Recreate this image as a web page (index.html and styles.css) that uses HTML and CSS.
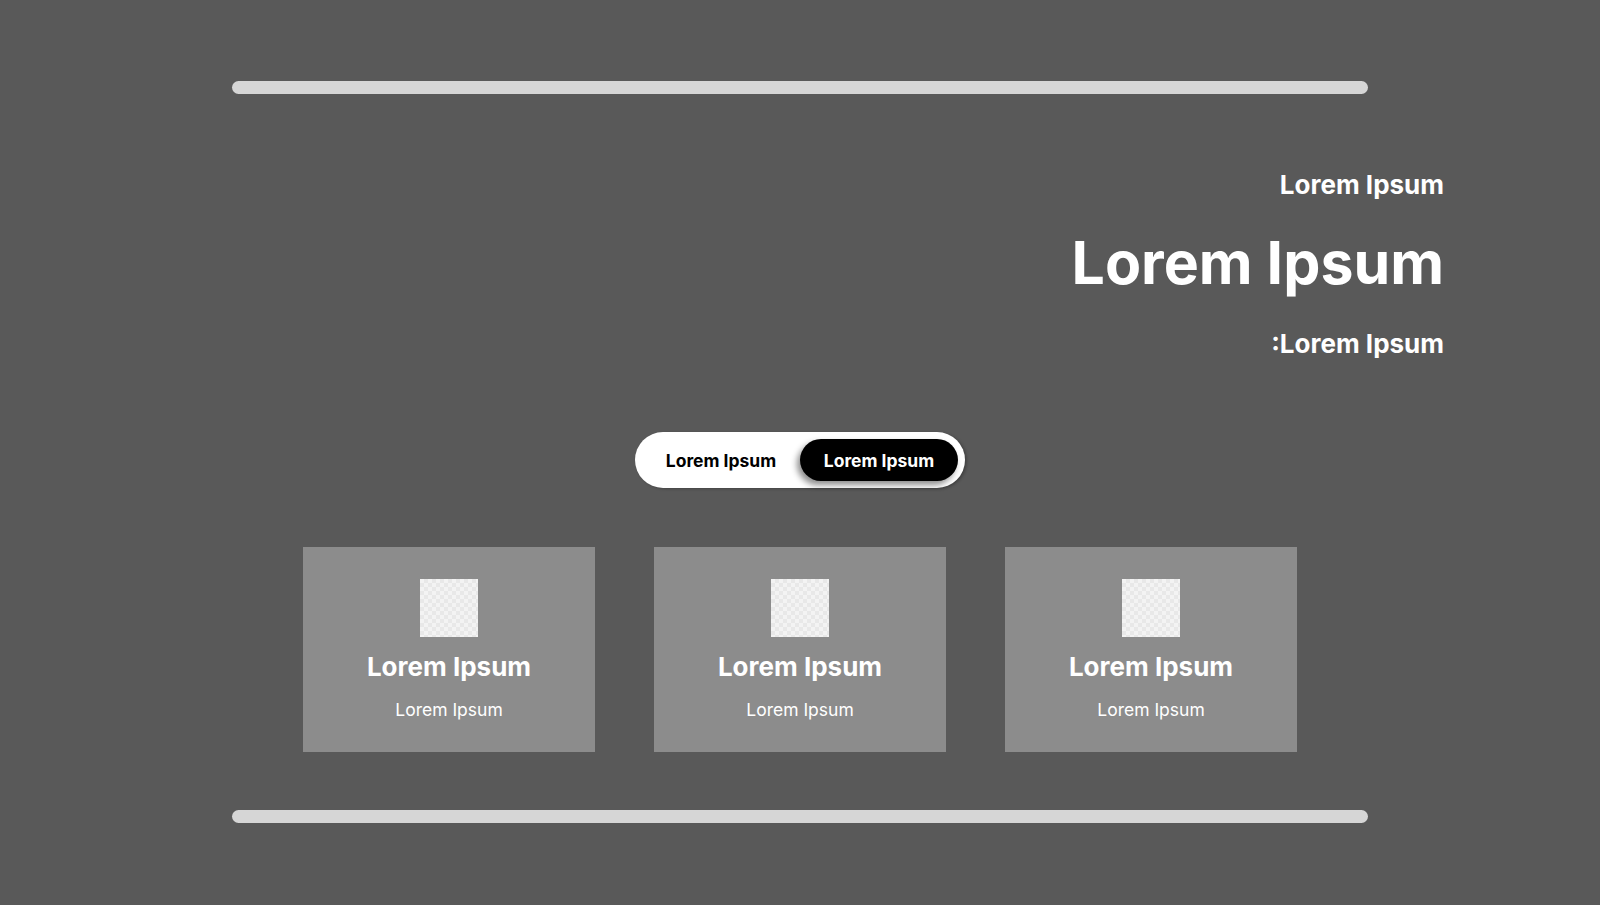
FILE: index.html
```html
<!DOCTYPE html>
<html lang="en">
<head>
<meta charset="utf-8">
<title>Lorem Ipsum</title>
<link rel="stylesheet" href="styles.css">
</head>
<body>
<main class="page">
  <div class="bar"></div>
  <header class="hero">
    <p class="eyebrow">Lorem Ipsum</p>
    <h1 class="title">Lorem Ipsum</h1>
    <p class="eyebrow lower">:Lorem Ipsum</p>
  </header>
  <div class="toggle">
    <button class="toggle-item">Lorem Ipsum</button>
    <button class="toggle-item active">Lorem Ipsum</button>
  </div>
  <section class="cards">
    <div class="card">
      <div class="thumb"></div>
      <h2 class="card-title">Lorem Ipsum</h2>
      <p class="card-text">Lorem Ipsum</p>
    </div>
    <div class="card">
      <div class="thumb"></div>
      <h2 class="card-title">Lorem Ipsum</h2>
      <p class="card-text">Lorem Ipsum</p>
    </div>
    <div class="card">
      <div class="thumb"></div>
      <h2 class="card-title">Lorem Ipsum</h2>
      <p class="card-text">Lorem Ipsum</p>
    </div>
  </section>
  <div class="bar bottom"></div>
</main>
</body>
</html>
```

FILE: styles.css
```css
* { box-sizing: border-box; }
html, body { margin: 0; padding: 0; }
body {
  background: #595959;
  font-family: Inter, "Noto Sans", sans-serif;
  color: #ffffff;
  width: 1600px;
  height: 905px;
  overflow: hidden;
}
.page {
  display: flex;
  flex-direction: column;
  align-items: center;
  padding-top: 81px;
}
.bar {
  width: 1136px;
  height: 13px;
  border-radius: 7px;
  background: #d6d6d6;
  flex: none;
}
.bar.bottom { margin-top: 58px; }
.hero {
  align-self: stretch;
  text-align: right;
  padding-right: 156px;
  margin-top: 75px;
}
.eyebrow {
  margin: 0;
  font-size: 26px;
  line-height: 32px;
  font-weight: 700;
}
.title {
  margin: 26px 0 0;
  font-size: 59px;
  line-height: 72px;
  font-weight: 700;
}
.eyebrow.lower { margin-top: 29px; }
.toggle {
  margin-top: 72px;
  display: flex;
  padding: 7px;
  background: #ffffff;
  border-radius: 28px;
  width: 330px;
  height: 56px;
  box-shadow: 2px 1px 3px rgba(0,0,0,0.25);
}
.toggle-item {
  flex: 1;
  height: 42px;
  border: 0;
  background: transparent;
  font-family: Inter, "Noto Sans", sans-serif;
  font-size: 17.5px;
  font-weight: 700;
  color: #000000;
  border-radius: 21px;
  padding: 0;
}
.toggle-item.active {
  background: #000000;
  color: #ffffff;
  box-shadow: -3px 4px 6px rgba(0,0,0,0.45);
}
.cards {
  margin-top: 59px;
  display: flex;
  gap: 59px;
}
.card {
  width: 292px;
  height: 205px;
  background: #8c8c8c;
  display: flex;
  flex-direction: column;
  align-items: center;
  padding-top: 32px;
}
.thumb {
  width: 58px;
  height: 58px;
  background-color: #f3f3f3;
  background-image: conic-gradient(#e8e8e8 25%, transparent 0 50%, #e8e8e8 0 75%, transparent 0);
  background-size: 8px 8px;
}
.card-title {
  margin: 14px 0 0;
  font-size: 26px;
  line-height: 32px;
  font-weight: 700;
}
.card-text {
  margin: 16px 0 0;
  font-size: 17.5px;
  line-height: 22px;
  font-weight: 400;
}
```
